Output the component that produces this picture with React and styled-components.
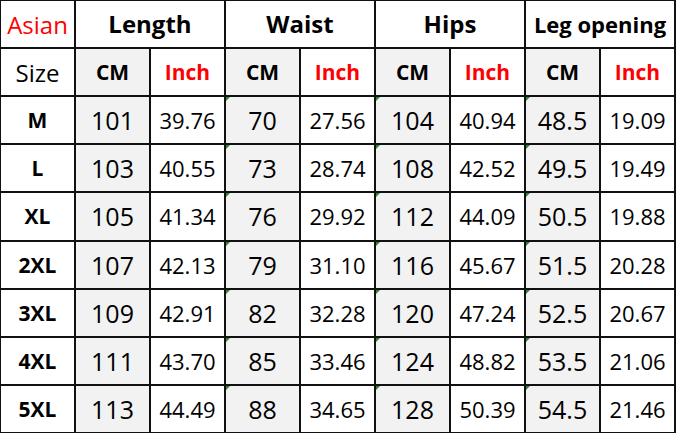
import styled, { createGlobalStyle } from "styled-components";

const GlobalStyle = createGlobalStyle`
  html, body {
    margin: 0;
    padding: 0;
    background: #fff;
  }
  body {
    font-family: "Open Sans", "Noto Sans", sans-serif;
  }
`;

const ROWS = [
  ["M", "101", "39.76", "70", "27.56", "104", "40.94", "48.5", "19.09"],
  ["L", "103", "40.55", "73", "28.74", "108", "42.52", "49.5", "19.49"],
  ["XL", "105", "41.34", "76", "29.92", "112", "44.09", "50.5", "19.88"],
  ["2XL", "107", "42.13", "79", "31.10", "116", "45.67", "51.5", "20.28"],
  ["3XL", "109", "42.91", "82", "32.28", "120", "47.24", "52.5", "20.67"],
  ["4XL", "111", "43.70", "85", "33.46", "124", "48.82", "53.5", "21.06"],
  ["5XL", "113", "44.49", "88", "34.65", "128", "50.39", "54.5", "21.46"],
];

const GROUPS = ["Length", "Waist", "Hips", "Leg opening"];

const App = () => {
  return (
    <>
      <GlobalStyle />
      <Table>
        <Cell>
          <Asian>Asian</Asian>
        </Cell>
        {GROUPS.map((g) => (
          <GroupCell key={g} small={g === "Leg opening"}>
            {g}
          </GroupCell>
        ))}

        <Cell>
          <SizeLabel>Size</SizeLabel>
        </Cell>
        {GROUPS.flatMap((g) => [
          <Cell key={g + "cm"} shaded>
            <UnitCm>CM</UnitCm>
          </Cell>,
          <Cell key={g + "in"}>
            <UnitInch>Inch</UnitInch>
          </Cell>,
        ])}

        {ROWS.map((row) =>
          row.map((val, i) => {
            if (i === 0) {
              return (
                <Cell key={row[0]}>
                  <SizeName>{val}</SizeName>
                </Cell>
              );
            }
            const isCm = i % 2 === 1;
            return (
              <Cell key={row[0] + i} shaded={isCm} flagged={isCm && i > 1}>
                {isCm ? <CmValue>{val}</CmValue> : <InchValue>{val}</InchValue>}
              </Cell>
            );
          })
        )}
      </Table>
    </>
  );
};

const Table = styled.div`
  width: 676px;
  height: 434px;
  box-sizing: border-box;
  display: grid;
  grid-template-columns: repeat(9, 1fr);
  grid-template-rows: repeat(9, 1fr);
  gap: 2px;
  padding: 1px 2px 2px 1px;
  background: #111;
`;

const Cell = styled.div`
  position: relative;
  display: flex;
  align-items: center;
  justify-content: center;
  background: ${(p) => (p.shaded ? "#f2f2f2" : "#ffffff")};
  color: #000;
  overflow: hidden;

  &::before {
    content: "";
    display: ${(p) => (p.flagged ? "block" : "none")};
    position: absolute;
    top: 0;
    left: 0;
    border-top: 4px solid #1f8a3a;
    border-right: 4px solid transparent;
  }
`;

const GroupCell = styled(Cell)`
  grid-column: span 2;
  font-weight: 700;
  font-size: ${(p) => (p.small ? "22px" : "24px")};
  padding-bottom: 1px;
`;

const Asian = styled.span`
  color: #ff0000;
  font-size: 24px;
`;

const SizeLabel = styled.span`
  font-size: 24px;
`;

const UnitCm = styled.span`
  font-size: 21px;
  font-weight: 700;
`;

const UnitInch = styled(UnitCm)`
  color: #ff0000;
`;

const SizeName = styled.span`
  font-size: 21px;
  font-weight: 700;
`;

const CmValue = styled.span`
  font-size: 25px;
`;

const InchValue = styled.span`
  font-size: 22px;
`;

export default App;
